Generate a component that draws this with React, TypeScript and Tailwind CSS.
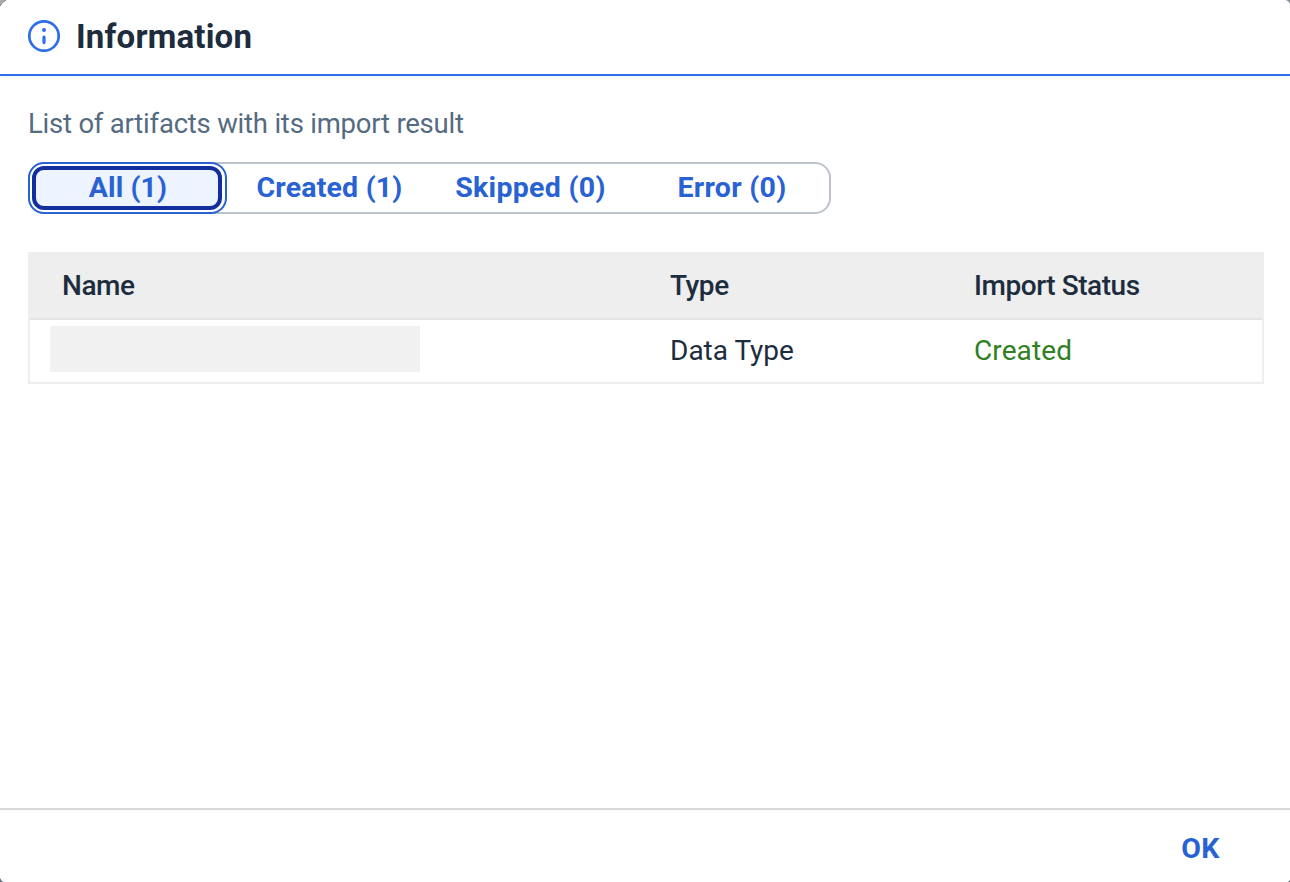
const filters = [
  { label: 'All (1)', style: 'w-[199px]' },
  { label: 'Created (1)', style: 'w-[203px] pl-0.5 text-[28.5px] tracking-[0.2px]' },
  { label: 'Skipped (0)', style: 'w-[201px] text-[28.5px] tracking-[0.3px]' },
  { label: 'Error (0)', style: 'w-[200px] pl-0.5 text-[28.5px] tracking-[0.3px]' },
];

function InfoIcon() {
  return (
    <svg width="32" height="32" viewBox="0 0 32 32" fill="none">
      <circle cx="16" cy="16" r="14.7" stroke="#2d6eea" strokeWidth="2.7" />
      <circle cx="16" cy="10" r="2" fill="#2d6eea" />
      <path d="M16 17v5.6" stroke="#2d6eea" strokeWidth="3.2" strokeLinecap="round" />
    </svg>
  );
}

function Corners() {
  return (
    <svg className="pointer-events-none absolute inset-0" width="1290" height="882">
      <path d="M0 0H6Q2 2 0 6Z" fill="#aaadb0" />
      <path d="M6 0Q2 2 0 6" fill="none" stroke="#777c82" />
      <path d="M1286 0H1290V4Q1289 1 1286 0Z" fill="#858d95" />
      <path d="M0 878Q1 881 4 882H0Z" fill="#66717c" />
      <path d="M1290 880V882H1288Z" fill="#66717c" />
    </svg>
  );
}

export default function App() {
  return (
    <div className="relative flex h-[882px] w-[1290px] flex-col overflow-hidden bg-white font-['Roboto',sans-serif] text-[28px] leading-8 text-[#1d2d3e]">
      <header className="flex h-[76px] shrink-0 items-center gap-4 border-b-2 border-[#2d6eea] pb-0.5 pl-7 shadow-[0_2px_4px_rgba(34,53,72,0.06)]">
        <InfoIcon />
        <h1 className="pt-0.5 text-[33px] font-bold tracking-[0.2px]">Information</h1>
      </header>

      <main className="flex grow flex-col px-7 pt-8 pr-[26px]">
        <p className="text-[27.5px] tracking-[-0.22px] text-[#556b82]">List of artifacts with its import result</p>
        <div className="mt-[22px] flex h-[52px] w-[803px] rounded-[16px] shadow-[inset_0_0_0_2px_#bcc3ca]">
          {filters.map((filter, index) => (
            <button
              key={filter.label}
              className={`${filter.style} h-[52px] shrink-0 font-bold text-[#2862d3] ${
                index === 0 ? 'rounded-[16px] border-2 border-[#2862d3] bg-white p-0.5 pr-[3px]' : ''
              }`}
            >
              {index === 0 ? (
                <span className="flex h-full items-center justify-center rounded-[12px] border-4 border-[#122fa0] bg-[#edf4ff] pl-0.5 text-[28.5px] tracking-[0.1px]">
                  {filter.label}
                </span>
              ) : (
                filter.label
              )}
            </button>
          ))}
        </div>

        <section className="mt-[38px] h-[132px] w-[1236px] border-2 border-[#eeeeee]">
          <div className="grid h-[66px] grid-cols-[608px_304px_1fr] items-center border-b-2 border-[#e4e4e4] bg-[#eeeeee] pl-8 font-medium tracking-[-0.45px]">
            <span>Name</span>
            <span>Type</span>
            <span>Import Status</span>
          </div>
          <div className="grid h-[62px] grid-cols-[608px_304px_1fr] items-center pl-8">
            <span className="-ml-3 mb-[4px] h-[46px] w-[370px] bg-[#f1f1f1]" />
            <span>Data Type</span>
            <span className="tracking-[0.1px] text-[#30801f]">Created</span>
          </div>
        </section>
      </main>

      <footer className="flex h-[74px] shrink-0 items-center justify-end border-t-2 border-[#d9d9d9] pt-1.5 pr-[70px]">
        <button className="text-[28.5px] font-bold tracking-[0.5px] text-[#2862d3]">OK</button>
      </footer>
      <Corners />
    </div>
  );
}
